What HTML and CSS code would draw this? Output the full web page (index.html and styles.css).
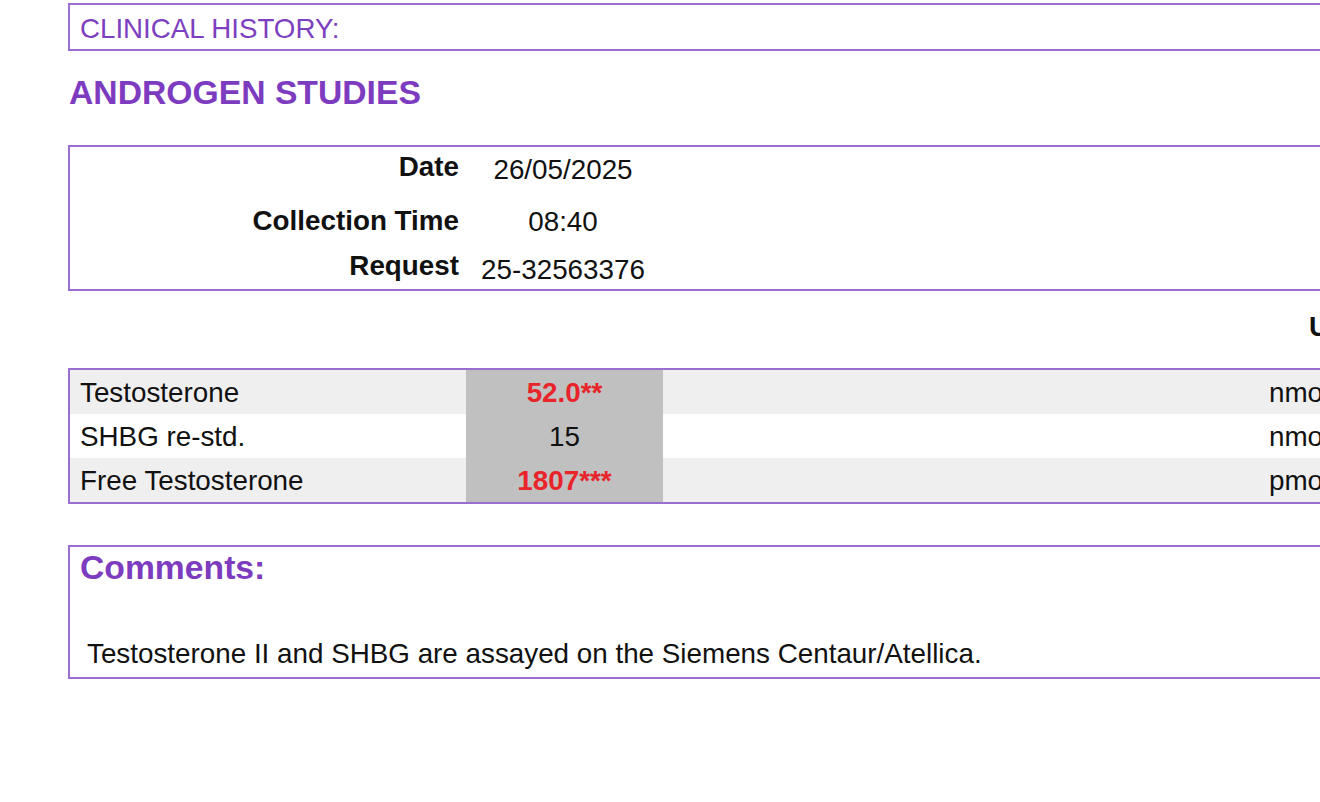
FILE: index.html
```html
<!DOCTYPE html>
<html lang="en">
<head>
<meta charset="utf-8">
<title>Androgen Studies</title>
<link rel="stylesheet" href="styles.css">
</head>
<body>
<div class="page">
  <div class="history-box">CLINICAL HISTORY:</div>
  <h1 class="section-title">ANDROGEN STUDIES</h1>

  <div class="info-box">
    <div class="info-row r-date"><span class="label">Date</span><span class="value v-date">26/05/2025</span></div>
    <div class="info-row r-time"><span class="label">Collection Time</span><span class="value v-time">08:40</span></div>
    <div class="info-row r-req"><span class="label">Request</span><span class="value v-req">25-32563376</span></div>
  </div>

  <div class="units-head"><span>Units</span></div>

  <div class="results">
    <div class="res-row shade">
      <div class="name">Testosterone</div>
      <div class="result high">52.0**</div>
      <div class="gap"></div>
      <div class="unit">nmol/L</div>
    </div>
    <div class="res-row">
      <div class="name">SHBG re-std.</div>
      <div class="result">15</div>
      <div class="gap"></div>
      <div class="unit">nmol/L</div>
    </div>
    <div class="res-row shade">
      <div class="name">Free Testosterone</div>
      <div class="result high">1807***</div>
      <div class="gap"></div>
      <div class="unit">pmol/L</div>
    </div>
  </div>

  <div class="comments">
    <div class="comments-title">Comments:</div>
    <p class="comment-text">Testosterone II and SHBG are assayed on the Siemens Centaur/Atellica.</p>
  </div>
</div>
</body>
</html>
```

FILE: styles.css
```css
html, body {
  margin: 0;
  padding: 0;
  background: #ffffff;
  overflow: hidden;
}

body {
  font-family: "Liberation Sans", Arial, sans-serif;
  color: #111111;
  font-size: 27.8px;
}

.page {
  width: 1460px;
  padding-left: 68px;
  padding-top: 3px;
}

.history-box {
  box-sizing: border-box;
  width: 1400px;
  height: 48px;
  border: 2px solid #9c6dd0;
  color: #7d40c0;
  font-size: 27.7px;
  line-height: 44px;
  padding-left: 10px;
  padding-top: 2px;
}

.section-title {
  margin: 0;
  color: #7d3cc0;
  font-size: 33.7px;
  font-weight: bold;
  line-height: 40px;
  padding-top: 21px;
  padding-left: 1px;
  margin-bottom: 33px;
}

.info-box {
  box-sizing: border-box;
  width: 1400px;
  height: 146px;
  border: 2px solid #9c6dd0;
  padding-top: 8px;
}

.info-row {
  display: flex;
  align-items: flex-start;
  line-height: 24px;
}

.r-time { margin-top: 27px; }
.r-req { margin-top: 20px; }

.label {
  width: 389px;
  text-align: right;
  font-weight: bold;
}

.value {
  width: 188px;
  margin-left: 10px;
  text-align: center;
}

.v-date { padding-top: 3px; }
.v-time { padding-top: 1px; }
.v-req { padding-top: 4px; }

.units-head {
  box-sizing: border-box;
  height: 77px;
  display: flex;
  align-items: center;
  padding-left: 1241px;
  padding-bottom: 6px;
  font-weight: bold;
  line-height: 30px;
}

.results {
  width: 1400px;
  border-top: 2px solid #9c6dd0;
  border-bottom: 2px solid #9c6dd0;
  border-left: 2px solid #9c6dd0;
}

.res-row {
  display: grid;
  grid-template-columns: 396px 197px 605px 200px;
  height: 44px;
  align-items: stretch;
  background: #ffffff;
}

.res-row.shade {
  background: #efefef;
}

.name,
.result,
.unit {
  box-sizing: border-box;
  height: 44px;
  padding-top: 2px;
  line-height: 42px;
}

.name {
  padding-left: 10px;
}

.result {
  background: #c0c0c0;
  text-align: center;
}

.result.high {
  color: #e8242a;
  font-weight: bold;
}

.unit {
  padding-left: 1px;
}

.comments {
  box-sizing: border-box;
  width: 1400px;
  height: 134px;
  margin-top: 41px;
  border: 2px solid #9c6dd0;
}

.comments-title {
  color: #7d3cc0;
  font-size: 33.7px;
  font-weight: bold;
  line-height: 40px;
  padding-left: 10px;
}

.comment-text {
  margin: 0;
  margin-top: 52px;
  padding-left: 17px;
  line-height: 30px;
}
```
